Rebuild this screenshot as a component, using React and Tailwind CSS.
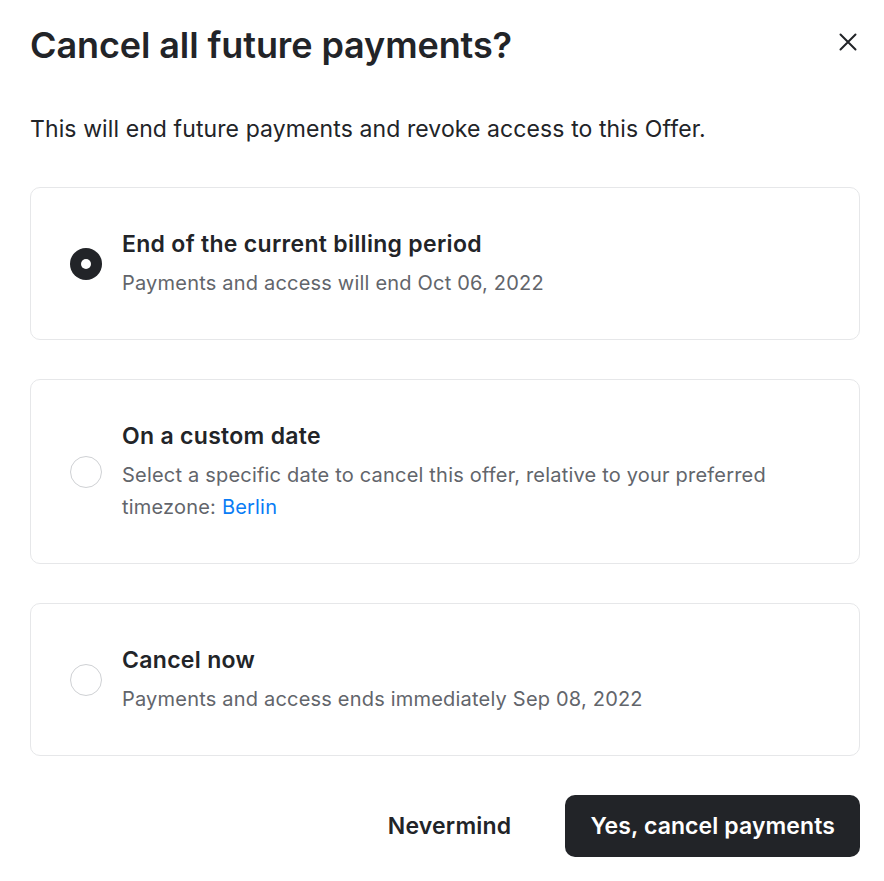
const options = [
  {
    id: 'period',
    title: 'End of the current billing period',
    desc: 'Payments and access will end Oct 06, 2022',
  },
  {
    id: 'custom',
    title: 'On a custom date',
    desc: (
      <>
        Select a specific date to cancel this offer, relative to your preferred timezone:{' '}
        <span className="text-[#0a7cf5]">Berlin</span>
      </>
    ),
  },
  {
    id: 'now',
    title: 'Cancel now',
    desc: 'Payments and access ends immediately Sep 08, 2022',
  },
];

export default function App() {
  const selected = 'period';

  return (
    <div
      className="w-[884px] h-[881px] bg-white pl-[30px] pr-[24px] pt-[22px] text-[#222428]"
      style={{ fontFamily: 'Inter, "Noto Sans", sans-serif' }}
    >
      <div className="flex items-start justify-between">
        <h1 className="text-[36px] leading-[46px] font-semibold tracking-[-0.1px]">Cancel all future payments?</h1>
        <button className="mt-[11px] mr-[3px]">
          <svg width="18" height="18" viewBox="0 0 18 18" fill="none" stroke="#222428" strokeWidth="2" strokeLinecap="round">
            <path d="M1.5 1.5l15 15M16.5 1.5l-15 15" />
          </svg>
        </button>
      </div>

      <p className="mt-[45px] text-[23px] leading-[32px] tracking-[0.1px]">
        This will end future payments and revoke access to this Offer.
      </p>

      <div className="mt-[42px] flex flex-col gap-[39px]">
        {options.map((o) => (
          <div
            key={o.id}
            className="flex items-center gap-[20px] rounded-[10px] border border-[#e6e7e9] py-[40px] pl-[39px] pr-[40px]"
          >
            {selected === o.id ? (
              <div className="flex h-[32px] w-[32px] shrink-0 items-center justify-center rounded-full bg-[#222428]">
                <div className="h-[10px] w-[10px] rounded-full bg-white" />
              </div>
            ) : (
              <div className="h-[32px] w-[32px] shrink-0 rounded-full border border-[#cfd1d4]" />
            )}
            <div>
              <div className="text-[23px] leading-[32px] font-semibold tracking-[0.3px]">{o.title}</div>
              <div className="mt-[7px] text-[20px] leading-[32px] tracking-[0.2px] text-[#62656b]">{o.desc}</div>
            </div>
          </div>
        ))}
      </div>

      <div className="mt-[39px] flex items-center justify-end gap-[54px]">
        <button className="text-[23px] font-semibold tracking-[0.2px]">Nevermind</button>
        <button className="h-[62px] rounded-[10px] bg-[#222428] px-[25px] text-[23px] font-semibold tracking-[0.1px] text-white">
          Yes, cancel payments
        </button>
      </div>
    </div>
  );
}
